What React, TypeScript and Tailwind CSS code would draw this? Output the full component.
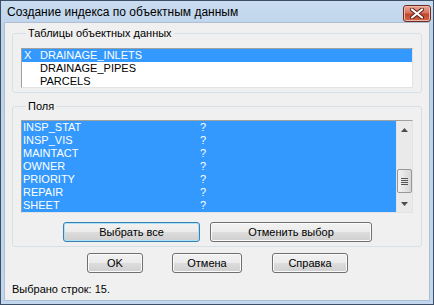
import type { FC, ReactNode } from "react";

const tables = [
  { mark: "X", name: "DRAINAGE_INLETS", selected: true },
  { mark: "", name: "DRAINAGE_PIPES", selected: false },
  { mark: "", name: "PARCELS", selected: false },
];

const fields = ["INSP_STAT", "INSP_VIS", "MAINTACT", "OWNER", "PRIORITY", "REPAIR", "SHEET"];

const font = "font-['Liberation_Sans',Arial,sans-serif]";

type BtnProps = {
  children: ReactNode;
  className?: string;
  isDefault?: boolean;
};

const Button: FC<BtnProps> = ({ children, className = "", isDefault }) => (
  <button
    className={`h-[20px] rounded-[3px] border text-[11px] text-black leading-none flex items-center justify-center ${
      isDefault
        ? "border-[#3c7fb1] shadow-[inset_0_0_0_1px_#a8e2f8]"
        : "border-[#707070] shadow-[inset_0_0_0_1px_#fbfbfb]"
    } bg-[linear-gradient(to_bottom,#f2f2f2_0%,#ebebeb_50%,#dddddd_50%,#cfcfcf_100%)] ${className}`}
  >
    {children}
  </button>
);

const Arrow: FC<{ up?: boolean }> = ({ up }) => (
  <div className="h-[17px] flex items-center justify-center">
    <svg width="7" height="4" viewBox="0 0 7 4">
      {up ? (
        <path d="M0 4 L3.5 0 L7 4 Z" fill="#4d4d4d" />
      ) : (
        <path d="M0 0 L3.5 4 L7 0 Z" fill="#4d4d4d" />
      )}
    </svg>
  </div>
);

const App: FC = () => {
  return (
    <div
      className={`w-[434px] h-[305px] flex flex-col border border-[#3d4f66] bg-[linear-gradient(to_bottom,#c9dcf0,#bdd3ea_30px,#c2d7ed)] px-[3px] pb-[3px] ${font}`}
    >
      {/* title bar */}
      <div className="h-[21px] flex items-center justify-between shrink-0">
        <span className="ml-[3px] text-[12px] text-black">
          Создание индекса по объектным данным
        </span>
        <div className="mt-[3px] mr-[-1px] w-[28px] h-[17px] rounded-[3px] border border-[#6e2a20] bg-[linear-gradient(to_bottom,#e8a898_0%,#d9735e_45%,#c4442a_55%,#d0684a_100%)] shadow-[inset_0_0_0_1px_#f0b8a8] flex items-center justify-center">
          <svg width="14" height="11" viewBox="0 0 14 11">
            <path d="M2 1.5 L12 9.5 M12 1.5 L2 9.5" stroke="#5a2018" strokeWidth="4" strokeLinecap="round" />
            <path d="M2 1.5 L12 9.5 M12 1.5 L2 9.5" stroke="#ffffff" strokeWidth="2.2" strokeLinecap="round" />
          </svg>
        </div>
      </div>

      {/* client area */}
      <div className="flex-1 bg-[#f0f0f0] border border-[#aebfd3] flex flex-col text-[11px] text-black">
        <fieldset className="mx-[7px] mt-[4px] border border-[#d5dfe5] rounded-[3px] px-[8px] pb-[4px]">
          <legend className="ml-[5px] px-[2px] leading-[13px]">Таблицы объектных данных</legend>
          <div className="mt-[8px] h-[40px] border border-[#a0a0a0] border-r-[#e3e3e3] border-b-[#e3e3e3] bg-white overflow-hidden">
            {tables.map((t) => (
              <div
                key={t.name}
                className={`h-[13px] flex items-center pl-[2px] leading-none ${
                  t.selected ? "bg-[#3399ff] text-white" : ""
                }`}
              >
                <span className="w-[16px]">{t.mark}</span>
                <span>{t.name}</span>
              </div>
            ))}
          </div>
        </fieldset>

        <fieldset className="mx-[7px] mt-[7px] border border-[#d5dfe5] rounded-[3px] px-[8px] pb-[3px]">
          <legend className="ml-[5px] px-[2px] leading-[13px]">Поля</legend>
          <div className="mt-[7px] h-[93px] border border-[#a0a0a0] border-r-[#e3e3e3] border-b-[#e3e3e3] bg-white flex">
            <div className="flex-1 bg-[#3399ff] text-white">
              {fields.map((f) => (
                <div key={f} className="h-[13px] flex items-center pl-[1px] leading-none">
                  <span className="w-[177px]">{f}</span>
                  <span>?</span>
                </div>
              ))}
            </div>
            <div className="w-[16px] bg-[#eaeaea] border-l border-[#e3e3e3] flex flex-col">
              <Arrow up />
              <div className="flex-1">
                <div className="mt-[31px] h-[24px] rounded-[2px] border border-[#979797] bg-[linear-gradient(to_right,#f3f3f3,#e4e4e4_50%,#d6d6d6)] flex flex-col items-center justify-center gap-[1px]">
                  <div className="w-[7px] h-[1px] bg-[#555]" />
                  <div className="w-[7px] h-[1px] bg-[#555]" />
                  <div className="w-[7px] h-[1px] bg-[#555]" />
                  <div className="w-[7px] h-[1px] bg-[#555]" />
                </div>
              </div>
              <Arrow />
            </div>
          </div>
          <div className="flex gap-[10px] ml-[42px] mt-[9px] mb-[1px]">
            <Button isDefault className="w-[137px]">Выбрать все</Button>
            <Button className="w-[162px]">Отменить выбор</Button>
          </div>
        </fieldset>

        <div className="flex ml-[82px] mt-[6px]">
          <Button className="w-[56px]">OK</Button>
          <Button className="w-[70px] ml-[29px]">Отмена</Button>
          <Button className="w-[76px] ml-[30px]">Справка</Button>
        </div>

        <div className="ml-[7px] mt-[10px] leading-[13px]">Выбрано строк: 15.</div>
      </div>
    </div>
  );
};

export default App;
